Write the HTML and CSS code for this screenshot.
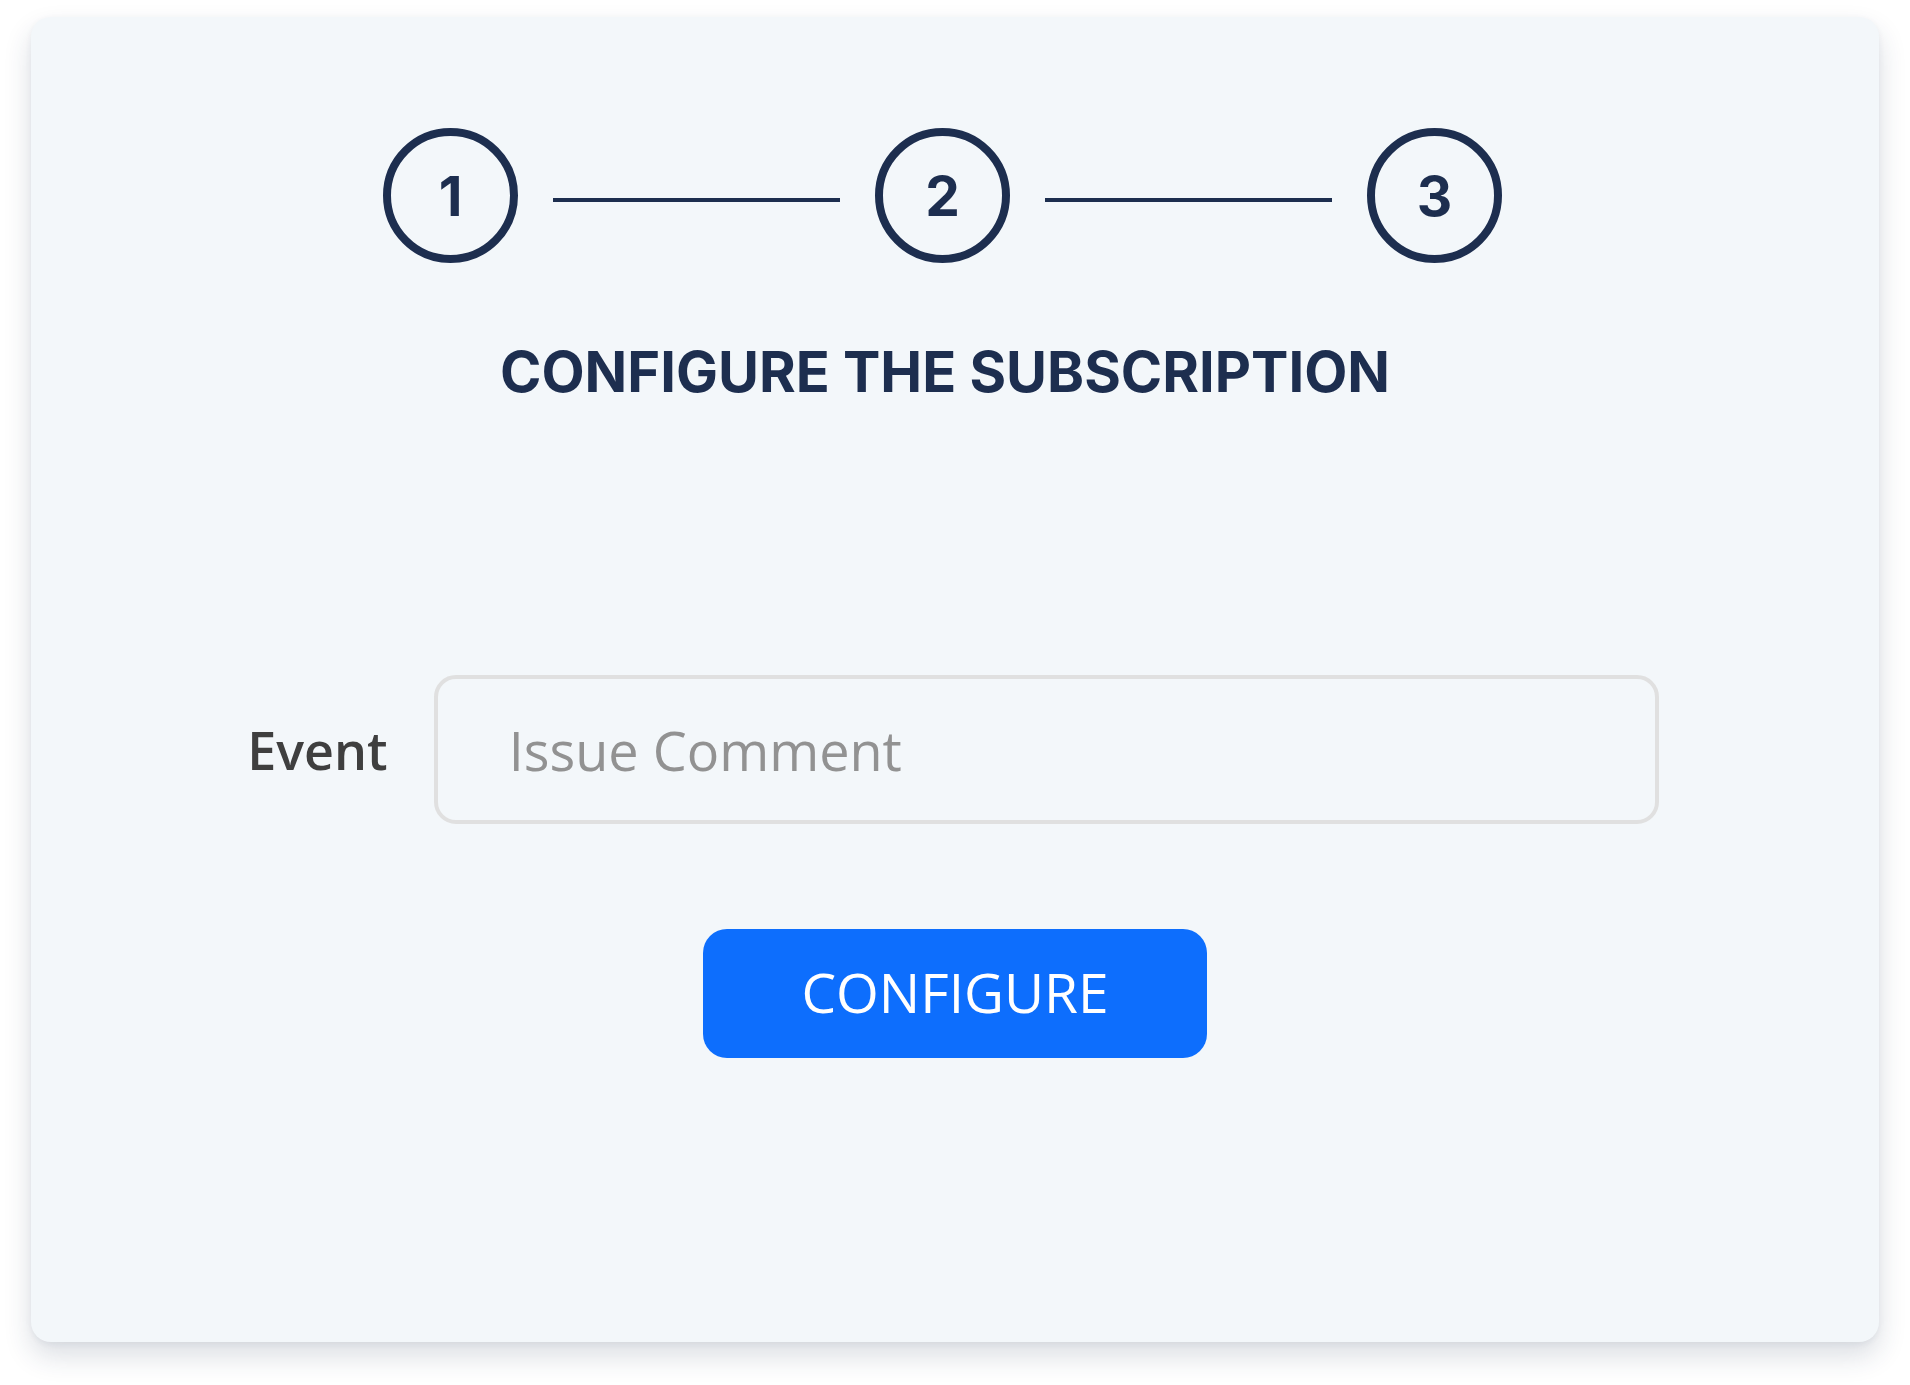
FILE: index.html
```html
<!DOCTYPE html>
<html lang="en">
  <head>
    <meta charset="UTF-8" />
    <meta name="viewport" content="width=device-width, initial-scale=1.0" />
    <title>Configure Subscription</title>
    <link rel="stylesheet" href="styles.css">
  </head>
  <body>
    <div class="card">
      <div class="stepper">
        <div class="step">
          <svg viewBox="0 0 135 135"><circle cx="67.5" cy="67.5" r="63.5" /></svg>
          <span>1</span>
        </div>
        <div class="step-line"></div>
        <div class="step">
          <svg viewBox="0 0 135 135"><circle cx="67.5" cy="67.5" r="63.5" /></svg>
          <span>2</span>
        </div>
        <div class="step-line"></div>
        <div class="step">
          <svg viewBox="0 0 135 135"><circle cx="67.5" cy="67.5" r="63.5" /></svg>
          <span>3</span>
        </div>
      </div>
      <h1>Configure the subscription</h1>
      <div class="form-row">
        <label for="event">Event</label>
        <input id="event" placeholder="Issue Comment" />
      </div>
      <button>Configure</button>
    </div>
  </body>
</html>
```

FILE: styles.css
```css
* {
  box-sizing: border-box;
  margin: 0;
  padding: 0;
}

body {
  font-family: "Open Sans", "Noto Sans", sans-serif;
  background: #fff;
  padding: 17px 31px 43px 31px;
}

.card {
  background: #f3f7fa;
  border-radius: 20px;
  height: 1325px;
  padding-top: 111px;
  display: flex;
  flex-direction: column;
  align-items: center;
  box-shadow: 0 14px 28px rgba(30, 47, 79, 0.16), 0 2px 6px rgba(30, 47, 79, 0.06);
}

.stepper {
  display: flex;
  align-items: center;
  gap: 35px;
  margin-right: 25px;
}

.step {
  flex: none;
  width: 135px;
  height: 135px;
  display: grid;
  place-items: center;
  font-family: "Inter", sans-serif;
  font-weight: 700;
  font-size: 55px;
  color: #1d2e4f;
}

.step svg,
.step span {
  grid-area: 1 / 1;
}

.step svg {
  width: 135px;
  height: 135px;
}

.step circle {
  fill: none;
  stroke: #1d2e4f;
  stroke-width: 8;
}

.step-line {
  width: 287px;
  height: 4px;
  background: #1d2e4f;
  margin-top: 8px;
}

h1 {
  margin-top: 80px;
  font-family: "Inter", sans-serif;
  font-weight: 700;
  font-size: 56px;
  line-height: 58px;
  color: #1d2e4f;
  text-transform: uppercase;
  margin-right: 20px;
}

.form-row {
  margin-top: 274px;
  display: flex;
  align-items: center;
  gap: 46px;
  margin-right: 4px;
}

label {
  font-size: 52px;
  font-weight: 600;
  color: #3f3f3f;
}

input {
  width: 1225px;
  height: 149px;
  border: 4px solid #e0e0e0;
  border-radius: 22px;
  background: transparent;
  padding-left: 71px;
  font-family: "Open Sans", "Noto Sans", sans-serif;
  font-size: 54px;
  color: #444;
  outline: none;
}

input::placeholder {
  color: #929292;
}

button {
  margin-top: 105px;
  width: 504px;
  height: 129px;
  border: none;
  border-radius: 24px;
  background: #0d6efd;
  color: #fff;
  font-family: "Open Sans", "Noto Sans", sans-serif;
  font-size: 55px;
  text-transform: uppercase;
  padding-bottom: 4px;
  cursor: pointer;
}
```
